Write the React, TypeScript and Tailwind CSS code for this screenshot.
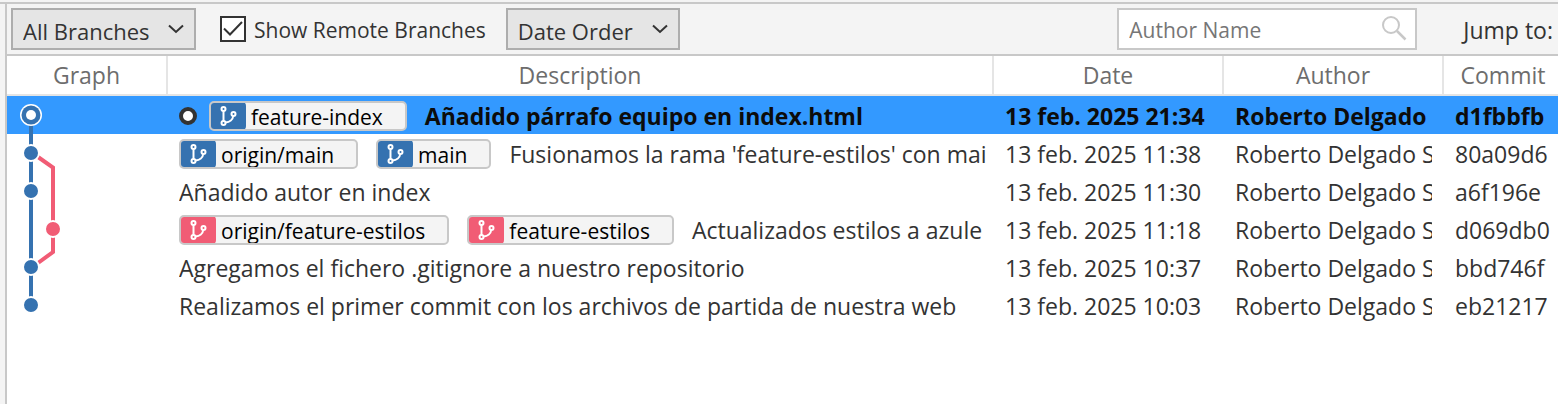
import { useState } from "react";
import type { ReactNode } from "react";

const BLUE = "#3572b0";
const PINK = "#f15c75";

type Tag = { name: string; color: "blue" | "pink" };

type Commit = {
  hash: string;
  message: string;
  date: string;
  author: string;
  tags: Tag[];
  head?: boolean;
  graph: ReactNode;
};

function Node({ x, color }: { x: number; color: string }) {
  return <circle cx={x} cy="19" r="8" fill={color} stroke="#fff" strokeWidth="2" />;
}

function Rail({ from, to }: { from: number; to: number }) {
  return <path d={`M24 ${from}V${to}`} stroke={BLUE} strokeWidth="4" />;
}

function Branch({ d }: { d: string }) {
  return <path d={d} fill="none" stroke={PINK} strokeWidth="4" />;
}

const commits: Commit[] = [
  {
    hash: "d1fbbfb",
    message: "Añadido párrafo equipo en index.html",
    date: "13 feb. 2025 21:34",
    author: "Roberto Delgado",
    tags: [{ name: "feature-index", color: "blue" }],
    head: true,
    graph: (
      <>
        <Rail from={28} to={38} />
        <circle cx="24" cy="19" r="11" fill="#fff" />
        <circle cx="24" cy="19" r="9.500" fill={BLUE} />
        <circle cx="24" cy="19" r="5" fill="#fff" />
      </>
    ),
  },
  {
    hash: "80a09d6",
    message: "Fusionamos la rama 'feature-estilos' con mai",
    date: "13 feb. 2025 11:38",
    author: "Roberto Delgado S",
    tags: [
      { name: "origin/main", color: "blue" },
      { name: "main", color: "blue" },
    ],
    graph: (
      <>
        <Rail from={0} to={38} />
        <Branch d="M31 23L46 33.500V38" />
        <Node x={24} color={BLUE} />
      </>
    ),
  },
  {
    hash: "a6f196e",
    message: "Añadido autor en index",
    date: "13 feb. 2025 11:30",
    author: "Roberto Delgado S",
    tags: [],
    graph: (
      <>
        <Rail from={0} to={38} />
        <Branch d="M46 0V38" />
        <Node x={24} color={BLUE} />
      </>
    ),
  },
  {
    hash: "d069db0",
    message: "Actualizados estilos a azule",
    date: "13 feb. 2025 11:18",
    author: "Roberto Delgado S",
    tags: [
      { name: "origin/feature-estilos", color: "pink" },
      { name: "feature-estilos", color: "pink" },
    ],
    graph: (
      <>
        <Rail from={0} to={38} />
        <Branch d="M46 0V38" />
        <Node x={46} color={PINK} />
      </>
    ),
  },
  {
    hash: "bbd746f",
    message: "Agregamos el fichero .gitignore a nuestro repositorio",
    date: "13 feb. 2025 10:37",
    author: "Roberto Delgado S",
    tags: [],
    graph: (
      <>
        <Rail from={0} to={38} />
        <Branch d="M46 0V4L31 15" />
        <Node x={24} color={BLUE} />
      </>
    ),
  },
  {
    hash: "eb21217",
    message: "Realizamos el primer commit con los archivos de partida de nuestra web",
    date: "13 feb. 2025 10:03",
    author: "Roberto Delgado S",
    tags: [],
    graph: (
      <>
        <Rail from={0} to={19} />
        <Node x={24} color={BLUE} />
      </>
    ),
  },
];

function BranchIcon() {
  return (
    <svg viewBox="0 0 20 22" className="h-[22px] w-5" fill="none" stroke="#fff" strokeWidth="2" aria-hidden="true">
      <circle cx="5.500" cy="4" r="2" />
      <circle cx="5.500" cy="18" r="2" />
      <circle cx="15.500" cy="9" r="2" />
      <path d="M5.500 6V16M7.500 17.500C11.500 17 15 14.500 15.200 11" />
    </svg>
  );
}

function TagLabel({ tag }: { tag: Tag }) {
  return (
    <span className="flex h-[30px] shrink-0 overflow-hidden rounded-[5px] border-2 border-[#c8c8c8] bg-[#f4f4f4] pr-[22px] text-black">
      <span
        className={`-my-px -ml-px flex w-9 shrink-0 items-center justify-center rounded-[4px] ${
          tag.color === "blue" ? "bg-[#3572b0]" : "bg-[#f15c75]"
        }`}
      >
        <BranchIcon />
      </span>
      <span className="pl-[5px] text-[21px] leading-[28px] font-normal">{tag.name}</span>
    </span>
  );
}

function Dropdown({ label, options, className }: { label: string; options: string[]; className: string }) {
  return (
    <span className={`relative block h-[42px] ${className}`}>
      <select
        aria-label={label}
        className="h-full w-full appearance-none rounded-none border-2 border-[#adadad] bg-[#e5e5e5] pt-[3px] pl-[10px] text-[22px] text-[#333333]"
      >
        {options.map((option) => (
          <option key={option}>{option}</option>
        ))}
      </select>
      <svg
        viewBox="0 0 16 10"
        className="pointer-events-none absolute top-4 right-3 h-[10px] w-4"
        fill="none"
        stroke="#333"
        strokeWidth="2"
        aria-hidden="true"
      >
        <path d="M1 1.500L8 8L15 1.500" />
      </svg>
    </span>
  );
}

function Cell({ children, className = "pr-3" }: { children: ReactNode; className?: string }) {
  return (
    <td className={`h-[38px] p-0 pt-[2px] pl-[11px] ${className}`}>
      <div className="overflow-hidden leading-[34px] whitespace-nowrap">{children}</div>
    </td>
  );
}

export default function App() {
  const [remote, setRemote] = useState(true);
  const [selected, setSelected] = useState("d1fbbfb");

  return (
    <div className="flex min-h-screen flex-col bg-[#f4f4f4] pt-[2px] font-['Open_Sans','Noto_Sans',sans-serif] text-[23px] leading-[30px] text-[#333333]">
      <div className="flex grow flex-col border-t-2 border-[#c8c8c8] pl-[5px]">
        <div className="flex grow flex-col border-l-2 border-[#c8c8c8] bg-white">
          <div className="flex items-center overflow-hidden border-b-2 border-[#c8c8c8] bg-[#f4f4f4] py-1 pr-1 pl-1 whitespace-nowrap">
            <Dropdown label="Branches" options={["All Branches", "Current Branch"]} className="w-[185px] shrink-0" />
            <label className="ml-6 flex shrink-0 items-center gap-2 text-[21px]">
              <span className="relative block size-[26px]">
                <input
                  type="checkbox"
                  checked={remote}
                  onChange={(e) => setRemote(e.target.checked)}
                  className="block size-full appearance-none border-2 border-[#333333] bg-white"
                />
                {remote && (
                  <svg
                    viewBox="0 0 26 26"
                    className="pointer-events-none absolute inset-0 size-full"
                    fill="none"
                    stroke="#333"
                    strokeWidth="2"
                    aria-hidden="true"
                  >
                    <path d="M4 12.500L10 18.500L22 6" />
                  </svg>
                )}
              </span>
              <span className="pt-[2px]">Show Remote Branches</span>
            </label>
            <Dropdown label="Order" options={["Date Order", "Ancestor Order"]} className="ml-5 w-[174px] shrink-0" />
            <span className="relative ml-auto block h-[42px] w-[300px] shrink-0">
              <input
                type="text"
                aria-label="Author Name"
                placeholder="Author Name"
                className="h-full w-full border-2 border-[#c8c8c8] bg-white pt-[2px] pr-10 pl-[10px] text-[21px] placeholder:text-[#767676]"
              />
              <svg
                viewBox="0 0 26 26"
                className="pointer-events-none absolute top-[7px] right-[10px] size-[26px]"
                fill="none"
                stroke="#c8c8c8"
                strokeWidth="2"
                aria-hidden="true"
              >
                <circle cx="10" cy="10" r="8" />
                <path d="M16 16L24.500 24.500" strokeWidth="2.500" />
              </svg>
            </span>
            <span className="ml-[46px] shrink-0 pt-[2px] pr-px">Jump to:</span>
          </div>

          <table className="w-full table-fixed border-collapse">
            <colgroup>
              <col className="w-[161px]" />
              <col />
              <col className="w-[230px]" />
              <col className="w-[220px]" />
              <col className="w-[114px]" />
            </colgroup>
            <thead>
              <tr>
                {["Graph", "Description", "Date", "Author", "Commit"].map((title) => (
                  <th key={title} className="p-0 font-normal text-[#6d6d6d]">
                    <div className="h-10 border-b-2 border-[#e5e5e5]">
                      <div
                        className={`h-[38px] leading-[38px] ${title === "Commit" ? "pl-1" : "border-r-2 border-[#e5e5e5]"}`}
                      >
                        {title}
                      </div>
                    </div>
                  </th>
                ))}
              </tr>
            </thead>
            <tbody>
              {commits.map((commit) => (
                <tr
                  key={commit.hash}
                  onClick={() => setSelected(commit.hash)}
                  className={commit.hash === selected ? "bg-[#3399ff] font-bold text-[#0c0c0c]" : ""}
                >
                  <td className="h-[38px] p-0">
                    <svg viewBox="0 0 60 38" className="block h-[38px] w-[60px]" aria-hidden="true">
                      {commit.graph}
                    </svg>
                  </td>
                  <Cell className="pr-2">
                    <div className="flex items-center gap-[18px]">
                      {commit.tags.length > 0 && (
                        <span className="flex shrink-0 items-center gap-[18px]">
                          {commit.head ? (
                            <span className="flex items-center gap-3">
                              <span className="block size-[18px] rounded-full border-4 border-[#333333] bg-white" />
                              <TagLabel tag={commit.tags[0]} />
                            </span>
                          ) : (
                            commit.tags.map((tag) => <TagLabel key={tag.name} tag={tag} />)
                          )}
                        </span>
                      )}
                      <span>{commit.message}</span>
                    </div>
                  </Cell>
                  <Cell>{commit.date}</Cell>
                  <Cell>{commit.author}</Cell>
                  <Cell className="pr-0">{commit.hash}</Cell>
                </tr>
              ))}
            </tbody>
          </table>
        </div>
      </div>
    </div>
  );
}
